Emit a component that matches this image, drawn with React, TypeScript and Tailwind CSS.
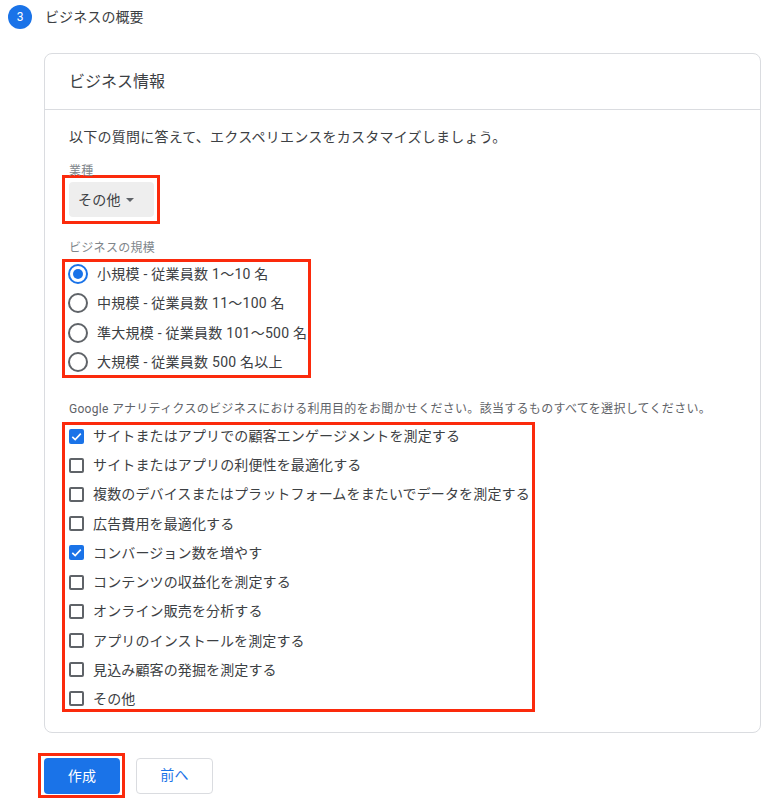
import React from "react";

const sizes = [
  "小規模 - 従業員数 1〜10 名",
  "中規模 - 従業員数 11〜100 名",
  "準大規模 - 従業員数 101〜500 名",
  "大規模 - 従業員数 500 名以上",
];

const purposes: { label: string; checked: boolean }[] = [
  { label: "サイトまたはアプリでの顧客エンゲージメントを測定する", checked: true },
  { label: "サイトまたはアプリの利便性を最適化する", checked: false },
  { label: "複数のデバイスまたはプラットフォームをまたいでデータを測定する", checked: false },
  { label: "広告費用を最適化する", checked: false },
  { label: "コンバージョン数を増やす", checked: true },
  { label: "コンテンツの収益化を測定する", checked: false },
  { label: "オンライン販売を分析する", checked: false },
  { label: "アプリのインストールを測定する", checked: false },
  { label: "見込み顧客の発掘を測定する", checked: false },
  { label: "その他", checked: false },
];

function Radio({ checked }: { checked: boolean }) {
  return (
    <span
      className={
        checked
          ? "w-[20px] h-[20px] rounded-full border-2 border-[#1a73e8] flex items-center justify-center shrink-0"
          : "w-[20px] h-[20px] rounded-full border-2 border-[#5f6368] flex items-center justify-center shrink-0"
      }
    >
      {checked && <span className="w-[10px] h-[10px] rounded-full bg-[#1a73e8]" />}
    </span>
  );
}

function Checkbox({ checked }: { checked: boolean }) {
  if (checked) {
    return (
      <span className="w-[15px] h-[15px] rounded-[2px] bg-[#1a73e8] flex items-center justify-center shrink-0">
        <svg width="13" height="13" viewBox="0 0 13 13">
          <path d="M2.3 6.8 L5.2 9.6 L10.8 3.6" fill="none" stroke="#fff" strokeWidth="1.6" />
        </svg>
      </span>
    );
  }
  return <span className="w-[15px] h-[15px] rounded-[2px] border-2 border-[#5f6368] shrink-0" />;
}

export default function App() {
  return (
    <div className="w-[772px] h-[808px] bg-white overflow-hidden text-[#3c4043] font-[Roboto,'Noto_Sans_CJK_JP',sans-serif]">
      <div className="flex items-center mt-[5px] ml-[8px] h-[24px]">
        <div className="w-[24px] h-[24px] rounded-full bg-[#1a73e8] text-white text-[12px] flex items-center justify-center">
          3
        </div>
        <div className="ml-[13px] text-[14px] leading-[20px] tracking-[0.1px] text-[#3c4043]">ビジネスの概要</div>
      </div>

      <div className="mt-[24px] ml-[44px] w-[717px] h-[680px] border border-[#dadce0] rounded-[8px]">
        <div className="h-[56px] border-b border-[#dadce0] px-[24px] flex items-center">
          <div className="text-[16px] leading-[24px] text-[#3c4043]">ビジネス情報</div>
        </div>

        <div className="pl-[24px] pt-[17px]">
          <div className="text-[14px] leading-[20px] tracking-[0.25px]">
            以下の質問に答えて、エクスペリエンスをカスタマイズしましょう。
          </div>

          <div className="mt-[16px] text-[12px] leading-[16px] tracking-[0.3px] text-[#80868b]">業種</div>

          <div className="mt-[-4px] ml-[-7px] w-fit border-[3px] border-[#fb2a0c] pl-[4px] pt-[4px] pr-[3px] pb-[4px]">
            <div className="w-[85px] h-[35px] rounded-[4px] bg-[#eeeeee] flex items-center pl-[9px]">
              <span className="text-[14px] leading-[20px] tracking-[0.25px] text-[#3c4043]">その他</span>
              <svg className="ml-[5px]" width="8" height="4" viewBox="0 0 8 4">
                <path d="M0 0 L8 0 L4 4 Z" fill="#5f6368" />
              </svg>
            </div>
          </div>

          <div className="mt-[16px] text-[12px] leading-[16px] tracking-[0.3px] text-[#80868b]">ビジネスの規模</div>

          <div className="mt-[3px] ml-[-7px] w-fit border-[3px] border-[#fb2a0c] pl-[3px] pr-[1px]">
            <div className="mt-[-2.67px] mb-[-1.67px]">
              {sizes.map((s, i) => (
                <div key={s} className="h-[29.33px] flex items-center">
                  <Radio checked={i === 0} />
                  <span className="ml-[9px] text-[14px] leading-[20px] tracking-[0.25px] text-[#3c4043] whitespace-nowrap">{s}</span>
                </div>
              ))}
            </div>
          </div>

          <div className="mt-[23px] text-[12px] leading-[16px] tracking-[0.3px] text-[#5f6368] whitespace-nowrap">
            Google アナリティクスのビジネスにおける利用目的をお聞かせください。該当するものすべてを選択してください。
          </div>

          <div className="mt-[5px] ml-[-7px] w-fit border-[3px] border-[#fb2a0c] pl-[4px] pr-[2px]">
            <div className="mt-[-3.6px] mb-[-4.6px]">
              {purposes.map((p) => (
                <div key={p.label} className="h-[29.22px] flex items-center">
                  <Checkbox checked={p.checked} />
                  <span className="ml-[9px] text-[14px] leading-[20px] tracking-[0.13px] text-[#3c4043] whitespace-nowrap">{p.label}</span>
                </div>
              ))}
            </div>
          </div>
        </div>
      </div>

      <div className="flex items-center mt-[20px] ml-[38px]">
        <div className="border-[3px] border-[#fb2a0c] pl-[3px] pt-[2px] pr-[2px] pb-[1px]">
          <button className="w-[76px] h-[36px] rounded-[4px] bg-[#1a73e8] text-white text-[14px] tracking-[0.25px] flex items-center justify-center">
            作成
          </button>
        </div>
        <button className="ml-[11px] w-[77px] h-[36px] rounded-[4px] border border-[#dadce0] bg-white text-[#1a73e8] text-[14px] tracking-[0.25px] flex items-center justify-center">
          前へ
        </button>
      </div>
    </div>
  );
}
